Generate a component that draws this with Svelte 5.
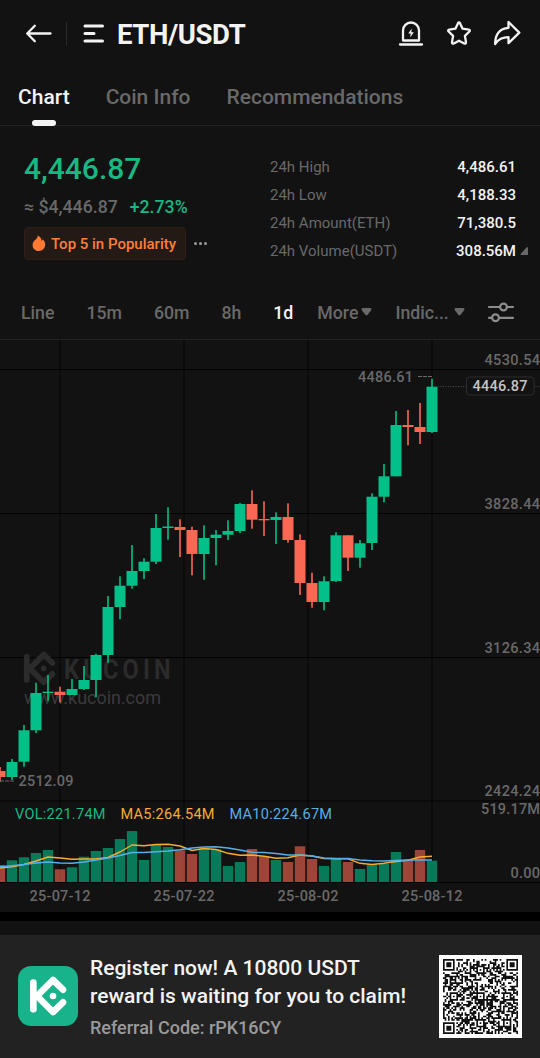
<script lang="ts">
  type Candle = [high: number, top: number, bottom: number, low: number, vol: number, down?: boolean];

  const STEP = 12;
  const BASE = 543.5;

  const stats = [
    { label: '24h High', value: '4,486.61' },
    { label: '24h Low', value: '4,188.33' },
    { label: '24h Amount(ETH)', value: '71,380.5' },
    { label: '24h Volume(USDT)', value: '308.56M' },
  ];

  const tabs = ['Chart', 'Coin Info', 'Recommendations'];
  let tab = $state('Chart');

  const intervals = ['Line', '15m', '60m', '8h', '1d'];
  let interval = $state('1d');

  // y positions inside the chart: wick top, body top, body bottom, wick bottom, volume top
  const candles: Candle[] = [
    [428, 432, 438, 443, 526, true],
    [420, 423, 438, 441, 521.3],
    [386, 391.3, 422.7, 427.7, 518.3],
    [343.7, 354, 391.3, 394, 514],
    [336, 352.7, 354, 361.7, 511],
    [347.7, 352.7, 356, 363.3, 530.3, true],
    [340, 350, 356, 356, 528.3],
    [327, 341, 350, 351, 517.7],
    [314.7, 316, 341, 358.3, 512],
    [257, 268, 316, 323.7, 509],
    [237.3, 246.7, 268, 280.3, 500],
    [206, 232, 246.7, 249.7, 492],
    [219.3, 222.7, 232, 240, 521],
    [175, 189, 222.7, 225, 506],
    [168.3, 187.5, 189, 200.7, 508],
    [180.3, 188, 191, 218, 511.3, true],
    [187.7, 191, 215, 236.3, 515, true],
    [186.3, 199, 215, 240.7, 509.3],
    [191, 195.7, 199, 226.3, 510.3],
    [181.3, 192, 195.7, 201, 527],
    [164, 165, 192, 194, 523],
    [151.3, 165, 180.7, 189.7, 510, true],
    [162.3, 180, 181.3, 197, 517.3, true],
    [173.3, 178, 181, 205, 521],
    [164.3, 178, 201, 203.7, 523, true],
    [195.3, 201, 244, 256, 507.3, true],
    [233.7, 244, 263, 268.7, 520, true],
    [237.3, 242.3, 263, 271.3, 527],
    [193.3, 196.3, 242, 243, 520],
    [196.3, 196.3, 218.7, 232, 523, true],
    [201, 204.3, 218.7, 228.7, 530],
    [154.3, 157.7, 204, 211, 526],
    [125, 137.3, 157.7, 163.3, 525],
    [72, 86, 137.3, 137.3, 513],
    [71, 86, 88, 106.3, 521, true],
    [64, 88, 93, 105, 511, true],
    [39.7, 47.7, 93, 94, 521.7],
  ];

  const ma5 = [
    529, 527.7, 525.5, 522, 518, 519, 520.3, 520, 520, 518.5, 513, 506, 506.7, 505.5, 505.3, 507, 511.5,
    509.5, 510.5, 514.3, 516.3, 516, 517.3, 519.3, 518.7, 516, 517, 519.5, 519.7, 519.8, 524.3, 525.5,
    524.3, 522.5, 521.2, 518, 517.3,
  ];
  const ma10 = [
    527.7, 526.7, 525.5, 524, 523, 524, 524.3, 523, 521, 519, 516.5, 513.5, 513.5, 512.8, 512, 510.8, 509,
    508, 507.8, 509, 511, 513.3, 513.5, 514.5, 516, 516, 517, 519, 519.5, 519.5, 521, 521.7, 522, 521.5,
    521, 521, 521,
  ];
  const line = (ys: number[]) => ys.map((y, i) => `${i * STEP},${y}`).join(' ');

  const dates = [
    { x: 60, label: '25-07-12' },
    { x: 184, label: '25-07-22' },
    { x: 308, label: '25-08-02' },
    { x: 432, label: '25-08-12' },
  ];
  const prices = [
    { y: 25.5, label: '4530.54', w: 55.5 },
    { y: 169.5, label: '3828.44', w: 55.5 },
    { y: 313.5, label: '3126.34', w: 55.5 },
    { y: 457, label: '2424.24', w: 55.5 },
    { y: 475, label: '519.17M', w: 59 },
    { y: 538.5, label: '0.00', w: 29.5 },
  ];

  const QR = 45;

  function ring(x: number, y: number, cx: number, cy: number) {
    return Math.max(Math.abs(x - cx), Math.abs(y - cy));
  }

  function qrPath() {
    const finders = [[3, 3], [QR - 4, 3], [3, QR - 4]];
    const aligns = [[22, 6], [6, 22], [22, 22], [38, 22], [22, 38], [38, 38]];
    let seed = 16;
    let d = '';
    for (let y = 0; y < QR; y++) {
      for (let x = 0; x < QR; x++) {
        seed = (seed * 1103515245 + 12345) % 2147483648;
        let on = seed / 2147483648 > 0.48;
        if (x === 6 || y === 6) on = (x + y) % 2 === 0;
        for (const [cx, cy] of aligns) {
          const r = ring(x, y, cx, cy);
          if (r <= 2) on = r !== 1;
        }
        for (const [cx, cy] of finders) {
          const r = ring(x, y, cx, cy);
          if (r <= 4) on = r === 3 || r <= 1;
        }
        if (on) d += `M${x} ${y}h1v1h-1z`;
      }
    }
    return d;
  }
  const qr = qrPath();
</script>

{#snippet logo()}
  <path d="M46 50V130" />
  <path d="M135 71 105 42 57 90 105 138 135 109" />
  <circle cx="105" cy="90" r="10" />
{/snippet}

{#snippet caret()}
  <svg class="caret" width="11" height="8" viewBox="0 0 11 8">
    <path d="M1.7 0h7.6q1.6.2 1 1.900L6.700 6.700q-1.200 1.300-2.400 0L.7 1.900Q.1.2 1.700 0z" />
  </svg>
{/snippet}

<main class="page">
  <header class="header">
    <svg class="back" width="28" height="22" viewBox="0 0 28 22">
      <path d="M25.5 10.5H2.5M9.8 2.800 2.200 10.500l7.600 7.700" />
    </svg>
    <span class="divider"></span>
    <svg class="menu" width="22" height="20" viewBox="0 0 22 20">
      <path d="M2 2H19.5M2 9.500H11M2 17H19.500" />
    </svg>
    <h1>ETH/USDT</h1>
    <div class="actions">
      <svg width="26" height="28" viewBox="0 0 26 28">
        <path d="M5 20.5V10.500a8 8 0 0 1 16 0v10zM2 24.500H24" />
        <path class="solid" d="m13.800 8.500-3.600 5h2.500l-.5 4 3.600-5.200h-2.500z" />
      </svg>
      <svg class="star" width="28" height="28" viewBox="0 0 28 28">
        <path d="M12.900 3.400q1.100-1.800 2.200 0l2.500 5.300 6.100.9q1.900.5.7 1.900l-4.500 4.400 1.100 6.400q0 1.900-1.800 1.200L14 20.700 8.800 23.500q-1.800.7-1.800-1.200l1.100-6.400L3.600 11.500q-1.200-1.400.7-1.900l6.100-.9z" />
      </svg>
      <svg width="30" height="28" viewBox="0 0 30 28">
        <path d="M16.500 2v5.800C8 8.500 3.200 13.500 3.100 24c3.400-5 6.900-6.800 13.400-6.800v6L27.300 12.600z" />
      </svg>
    </div>
  </header>

  <nav class="tabs">
    {#each tabs as name (name)}
      <button class:active={tab === name} onclick={() => (tab = name)}>{name}</button>
    {/each}
  </nav>

  <section class="summary">
    <div class="quote">
      <div class="price">4,446.87</div>
      <div class="approx"><span>≈ $4,446.87</span><span class="change">+2.73%</span></div>
      <div class="badges">
        <span class="badge">
          <svg width="14" height="17" viewBox="0 0 14 17">
            <path d="M5.700.5C9 2.200 9.600 4 9.400 5.800c1-.3 1.200-1 1.300-1.600 1.700 1.600 2.600 3.500 2.500 5.600A6.300 6.300 0 0 1 7 16C3.200 16 .5 13.300.6 9.900.6 8 1.600 6.300 2.800 5.200 4.500 3.900 6 2.400 5.700.5z" />
          </svg>
          Top 5 in Popularity
        </span>
        <span class="dots"><i></i><i></i><i></i></span>
      </div>
    </div>
    <dl class="stats">
      {#each stats as { label, value } (label)}
        <div><dt>{label}</dt><dd>{value}</dd></div>
      {/each}
      <svg class="corner" width="9" height="8" viewBox="0 0 9 8"><path d="M7 0 8 .5V8H1L.5 7z" /></svg>
    </dl>
  </section>

  <nav class="intervals">
    {#each intervals as name (name)}
      <button class:active={interval === name} onclick={() => (interval = name)}>{name}</button>
    {/each}
    <button class="more">More{@render caret()}</button>
    <button class="indic">Indic...{@render caret()}</button>
    <svg class="sliders" width="28" height="22" viewBox="0 0 28 22">
      <path d="M2 5h11M20 5h6M2 15.800h3M12 15.800h14" />
      <circle cx="16.500" cy="5" r="3.400" />
      <circle cx="8.500" cy="15.800" r="3.400" />
    </svg>
  </nav>

  <svg class="chart" width="540" height="573" viewBox="0 0 540 573" role="img" aria-label="ETH/USDT 1d">
    <g class="grid">
      {#each dates as { x } (x)}
        <path class="grid-v" d="M{x} 1V544" />
      {/each}
      {#each [30.5, 174.5, 318.5, 462, 543.5] as y (y)}
        <path d="M0 {y}H540" />
      {/each}
    </g>
    <path class="edge" d="M0 .5H540" />

    <g class="mark" transform="translate(13.5 303.5) scale(.288)">{@render logo()}</g>
    <text class="brand" transform="translate(64 340) scale(.84 1)" textLength="127">KUCOIN</text>
    <text class="site" x="24" y="364.5" textLength="137">www.kucoin.com</text>

    {#each candles as [high, top, bottom, low, vol, down], i (i)}
      {@const x = i * STEP}
      <g class={down ? 'down' : 'up'}>
        <rect x={x - 0.8} y={high} width="1.6" height={low - high} />
        <rect x={x - 5.5} y={top} width="11" height={Math.max(1.3, bottom - top)} />
        <rect class="vol" x={x - 5.2} y={vol} width="10.4" height={BASE - 0.5 - vol} />
      </g>
    {/each}
    <polyline class="ma5" points={line(ma5)} />
    <polyline class="ma10" points={line(ma10)} />

    <path class="pointer" d="M418 37.500H432M0 442H14" />
    <text x="358" y="42.500" textLength="55">4486.61</text>
    <text x="18.500" y="447" textLength="55">2512.09</text>

    {#each prices as { y, label, w } (label)}
      <text x={540 - w} {y} textLength={w}>{label}</text>
    {/each}
    <path class="last-line" d="M438 47.500H540" />
    <rect class="last" x="466.500" y="38" width="67.500" height="18" rx="3" />
    <text class="last-text" x="472.500" y="52" textLength="55">4446.87</text>

    <text class="legend green" x="15" y="479.500" textLength="90.500">VOL:221.74M</text>
    <text class="legend orange" x="120.500" y="479.500" textLength="94">MA5:264.54M</text>
    <text class="legend blue" x="229.500" y="479.500" textLength="102.500">MA10:224.67M</text>

    {#each dates as { x, label } (x)}
      <text x={x - 30.5} y="562" textLength="61">{label}</text>
    {/each}
  </svg>

  <footer class="promo">
    <svg class="app-icon" width="60" height="60" viewBox="0 0 180 180">{@render logo()}</svg>
    <div class="copy">
      <p class="lead">Register now! A 10800 USDT<br />reward is waiting for you to claim!</p>
      <p class="code">Referral Code: rPK16CY</p>
    </div>
    <div class="qr">
      <svg width="75" height="75" viewBox="0 0 {QR} {QR}"><path d={qr} /></svg>
    </div>
  </footer>
</main>

<style>
  :global(body) {
    margin: 0;
    background: #121212;
  }

  .page {
    width: 540px;
    height: 1058px;
    overflow: hidden;
    display: flex;
    flex-direction: column;
    background: #121212;
    color: #f3f3f3;
    font-family: Roboto, 'Liberation Sans', sans-serif;
    font-weight: 500;
  }

  svg {
    display: block;
    flex: none;
  }
  path,
  circle {
    stroke-linecap: round;
    stroke-linejoin: round;
  }
  button {
    padding: 0;
    border: 0;
    background: none;
    color: #696969;
    font: inherit;
    white-space: nowrap;
    cursor: pointer;
  }

  .header {
    display: flex;
    align-items: center;
    height: 68px;
    padding: 0 18px 0 25px;
  }
  .header path {
    fill: none;
    stroke: #f3f3f3;
    stroke-width: 2.3;
  }
  .header .menu path {
    stroke-width: 3;
  }
  .header .solid {
    fill: #f3f3f3;
    stroke: none;
  }
  .divider {
    width: 1px;
    height: 24px;
    margin: 0 16px 0 13px;
    background: #292929;
  }
  h1 {
    margin: 2px 0 0 12px;
    font-size: 27.5px;
    line-height: 32px;
    font-weight: 700;
    letter-spacing: -0.4px;
  }
  .actions {
    display: flex;
    gap: 20px;
    margin-left: auto;
  }
  .star {
    margin: 0 -1px 0 1px;
  }

  .tabs {
    display: flex;
    gap: 36px;
    height: 57px;
    padding-left: 18px;
    border-bottom: 1px solid #222;
    font-size: 21px;
  }
  .tabs button {
    position: relative;
    padding-top: 1px;
  }
  .tabs .active {
    color: #f3f3f3;
  }
  .tabs .active::after {
    content: '';
    position: absolute;
    left: 50%;
    bottom: -1px;
    width: 24px;
    height: 6px;
    margin-left: -12px;
    border-radius: 3px;
    background: #f3f3f3;
  }

  .summary {
    display: flex;
    justify-content: space-between;
    height: 159px;
    padding: 0 24px;
  }
  .price {
    margin-top: 24px;
    color: #18b883;
    font-size: 30px;
    line-height: 38px;
  }
  .approx {
    display: flex;
    gap: 12px;
    color: #696969;
    font-size: 17.7px;
    line-height: 38px;
  }
  .change {
    color: #18b883;
  }
  .badges {
    display: flex;
    align-items: center;
    gap: 8px;
    margin-top: 1px;
  }
  .badge {
    display: flex;
    align-items: center;
    gap: 5px;
    box-sizing: border-box;
    width: 162px;
    height: 33px;
    padding-left: 7px;
    border: 1px solid #2f1f17;
    border-radius: 4px;
    background: #231a15;
    color: #ff7f37;
    font-size: 15px;
    white-space: nowrap;
  }
  .badge path {
    fill: #ff7a35;
  }
  .dots {
    display: flex;
    gap: 2px;
  }
  .dots i {
    width: 3px;
    height: 3px;
    border-radius: 50%;
    background: #9a9a9a;
  }

  .stats {
    position: relative;
    width: 246px;
    margin: 27px 0 0;
    font-size: 15px;
    line-height: 28px;
  }
  .stats div {
    display: flex;
    justify-content: space-between;
  }
  dt {
    color: #696969;
    font-weight: 400;
  }
  dd {
    margin: 0;
  }
  .corner {
    position: absolute;
    left: 250px;
    top: 94px;
  }
  .corner path {
    fill: #696969;
  }

  .intervals {
    display: flex;
    align-items: center;
    height: 53px;
    padding: 1px 0 0 21px;
    font-size: 17.7px;
    gap: 32px;
  }
  .intervals .active {
    color: #f3f3f3;
  }
  .intervals .more,
  .intervals .indic {
    display: flex;
    align-items: center;
    gap: 3px;
    margin-left: -8px;
  }
  .intervals .indic {
    gap: 5px;
    margin-left: -9px;
  }
  .caret {
    margin-top: -2px;
  }
  .caret path {
    fill: #696969;
  }
  .sliders {
    margin-left: -10px;
  }
  .sliders path,
  .sliders circle {
    fill: none;
    stroke: #8c8c8c;
    stroke-width: 2.2;
  }

  .chart text {
    fill: #696969;
    font-size: 14.5px;
  }
  .grid path {
    stroke: #030303;
  }
  .grid .grid-v {
    stroke: #0b0b0b;
    stroke-width: 2;
  }
  .edge {
    stroke: #222;
  }
  .mark path {
    fill: none;
    stroke: #2b2b2b;
    stroke-width: 20;
  }
  .mark circle {
    fill: #2b2b2b;
  }
  .chart .brand {
    fill: #2b2b2b;
    font-size: 28px;
    font-weight: 700;
  }
  .chart .site {
    fill: #3b3b3b;
    font-size: 18px;
    font-weight: 400;
  }
  .up {
    fill: #03c088;
  }
  .down {
    fill: #fa6753;
  }
  .vol {
    opacity: 0.6;
  }
  .ma5,
  .ma10 {
    fill: none;
    stroke: #f4ad33;
    stroke-width: 1.4;
    stroke-linejoin: round;
  }
  .ma10 {
    stroke: #58aee8;
  }
  .pointer {
    stroke: #696969;
    stroke-dasharray: 4 1;
    stroke-linecap: butt;
  }
  .last-line {
    stroke: #4a4a4a;
    stroke-dasharray: 1 1.5;
    stroke-linecap: butt;
  }
  .last {
    fill: #121212;
    stroke: #2c2c2c;
  }
  .chart .last-text {
    fill: #c4c4c4;
  }
  .chart .legend {
    font-weight: 400;
  }
  .chart .green {
    fill: #18b883;
  }
  .chart .orange {
    fill: #f4ad33;
  }
  .chart .blue {
    fill: #58aee8;
  }

  .promo {
    display: flex;
    align-items: center;
    flex: 1;
    padding: 0 18px;
    border-top: 14px solid #121212;
    box-shadow: 0 -9px #000;
    margin-top: 9px;
    background: #222;
  }
  .app-icon {
    margin-top: -2px;
    border-radius: 13px;
    background: #18b28b;
  }
  .app-icon path {
    fill: none;
    stroke: #fff;
    stroke-width: 20;
  }
  .app-icon circle {
    fill: #fff;
  }
  .copy {
    margin: 2px 0 0 12px;
    white-space: nowrap;
  }
  .copy p {
    margin: 0;
  }
  .lead {
    font-size: 21px;
    line-height: 28px;
  }
  .code {
    padding-top: 5px;
    color: #9a9a9a;
    font-size: 18px;
    line-height: 26px;
  }
  .qr {
    display: flex;
    align-items: center;
    justify-content: center;
    width: 83px;
    height: 83px;
    margin-left: auto;
    background: #fff;
  }
  .qr path {
    fill: #111;
  }
</style>
